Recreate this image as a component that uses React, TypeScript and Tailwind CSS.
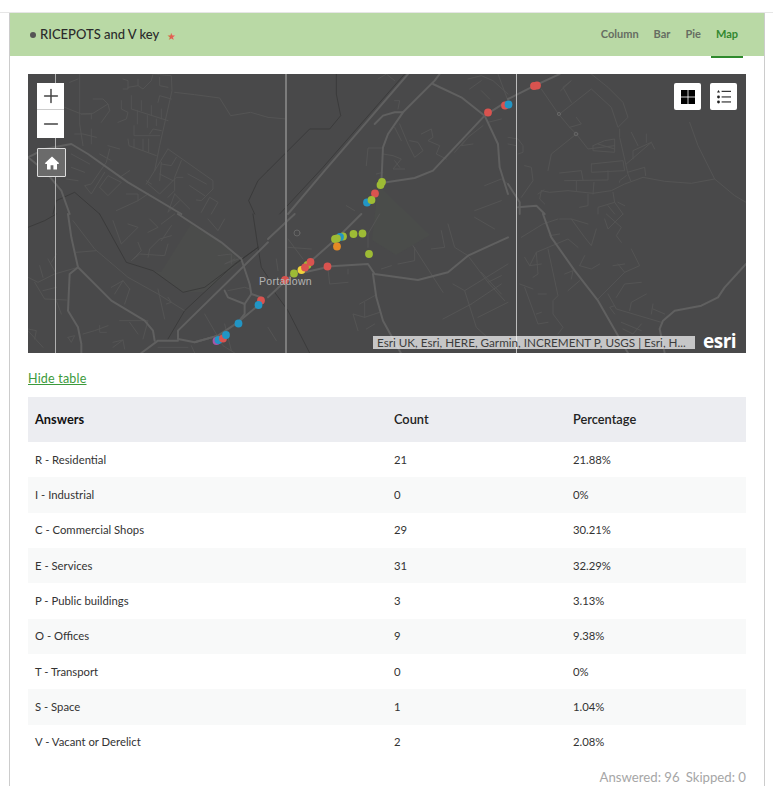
import { Minus, Plus } from "lucide-react";

const rows = [
  { answer: "R - Residential", count: 21, pct: "21.88%" },
  { answer: "I - Industrial", count: 0, pct: "0%" },
  { answer: "C - Commercial Shops", count: 29, pct: "30.21%" },
  { answer: "E - Services", count: 31, pct: "32.29%" },
  { answer: "P - Public buildings", count: 3, pct: "3.13%" },
  { answer: "O - Offices", count: 9, pct: "9.38%" },
  { answer: "T - Transport", count: 0, pct: "0%" },
  { answer: "S - Space", count: 1, pct: "1.04%" },
  { answer: "V - Vacant or Derelict", count: 2, pct: "2.08%" },
];

type Tile = {
  x: number;
  y: number;
  major: string[];
  minor: string[];
  dark: string[];
};

// street traces per tile of the map, in units of a third of a pixel
const tiles: Tile[] = [
  {
    x: 28,
    y: 74,
    major: ["0,250 50,225 130,210 180,240 300,325 460,420", "0,250 50,290 100,350 125,420"],
    minor: [
      "155,0 155,150 165,215",
      "150,15 125,25",
      "110,100 160,120 195,118 240,90 245,110 220,145",
      "195,75 225,75 240,90",
      "160,120 190,120 190,135",
      "140,180 165,180 205,190",
      "190,165 190,210",
      "285,15 300,20 300,45 285,45",
      "300,40 330,35 345,45 370,20 375,0 430,5 432,50 395,215 380,290 355,330",
      "395,10 395,35 420,40",
      "330,15 330,35",
      "440,55 500,62 575,72 608,125 668,115 720,130",
      "430,75 395,65 390,85",
      "310,65 310,105 420,140",
      "280,80 280,105 300,115 295,135 270,145",
      "340,80 340,110",
      "370,95 370,125",
      "400,105 400,135",
      "328,110 328,150",
      "358,125 358,160",
      "385,135 385,155",
      "318,155 318,185 395,185",
      "365,180 375,165 400,170",
      "300,195 303,215 385,245",
      "318,195 318,222",
      "345,195 345,230",
      "362,195 362,235",
      "420,225 555,320 555,345 520,380 505,378",
      "420,225 380,290",
      "360,330 395,360 445,310 465,310",
      "400,270 430,275 445,250",
      "460,260 440,310 440,350 420,370",
      "480,300 535,330",
      "485,335 530,365",
      "395,300 435,320",
      "400,265 395,320",
      "370,330 355,320",
      "240,215 275,225",
      "245,225 235,265 190,330 170,335 190,360 230,295",
      "215,240 250,260",
      "215,340 240,305 280,325 240,365 215,340",
      "130,240 185,270",
      "130,280 170,295",
      "115,315 150,320",
      "275,310 305,290",
      "295,360 330,360 330,380 265,410",
      "360,360 330,380",
      "440,360 485,405",
      "455,380 420,415 440,360",
      "520,415 545,370 570,385 550,420",
    ],
    dark: ["75,420 85,380 140,355 215,420", "720,290 690,320 662,380 680,420"],
  },
  {
    x: 268,
    y: 74,
    major: [
      "60,420 170,290 420,0",
      "340,330 345,220 360,180 405,115 500,20 515,0",
      "320,150 345,125 380,115 405,115",
      "355,325 440,312 495,290 650,125 712,85",
      "495,30 580,70 650,125 690,210 695,280 720,360",
    ],
    minor: [
      "0,130 55,135",
      "330,15 355,0 380,20",
      "380,80 395,80 390,105",
      "395,150 420,210 440,250 465,230 450,205 425,200",
      "380,160 400,200",
      "460,180 490,165 495,190 480,200 515,215 505,240 535,255",
      "295,275 300,222 345,222",
      "345,240 375,245 400,255 375,285 410,285",
      "380,260 395,280",
      "325,300 345,295",
      "600,15 640,5 675,20 720,60",
      "605,45 640,20",
      "640,50 665,75",
      "690,0 720,80",
      "660,145 700,135",
      "645,155 600,190 580,215 615,210",
      "560,235 590,200",
      "650,335 700,315 720,330",
      "620,410 700,380",
      "235,395 260,410",
    ],
    dark: ["205,0 205,60 218,125 185,165 125,165 0,290", "35,420 165,280 410,0"],
  },
  {
    x: 508,
    y: 74,
    major: ["0,75 80,35 155,0", "0,330 35,385 35,420", "30,400 85,395 110,420"],
    minor: [
      "100,45 150,118 185,160 205,180 240,225 320,215",
      "155,120 250,45 310,100 330,160 360,130 345,85 300,40 250,0",
      "158,50 190,20 165,40 190,85",
      "185,160 220,150 205,130",
      "205,180 130,240 120,290",
      "255,215 290,200 320,195 320,235 255,230 255,215",
      "335,165 335,190 360,300 368,320",
      "270,210 320,225",
      "250,270 345,260 350,290 250,295 250,270",
      "355,270 430,205 440,225",
      "375,255 375,230 430,205",
      "415,180 415,205",
      "370,175 390,215",
      "358,295 410,280 413,305",
      "155,297 220,290 225,318",
      "170,320 300,318 300,290",
      "205,320 205,350",
      "258,325 255,360",
      "335,325 335,320 355,305",
      "100,350 125,355 180,350 255,358 310,350 350,330 405,310 470,322 550,328 620,315 680,365 714,385",
      "545,145 570,215 620,315",
      "100,350 95,375 110,390",
      "90,360 108,348",
      "240,360 240,395 215,400",
      "315,355 320,385 270,400 270,420",
      "320,385 345,420",
      "300,395 320,420",
      "330,385 350,395",
      "0,190 30,195 45,215 45,235 30,240",
      "0,210 25,215",
      "50,275 70,280 75,320 40,370",
    ],
    dark: [],
  },
  {
    x: 28,
    y: 214,
    major: [
      "120,0 130,70 150,160 250,260 350,320 375,350 380,380",
      "150,160 125,180 120,290 150,340 160,390 160,417",
      "450,0 580,85 640,135 665,210 670,240 700,250",
      "720,85 450,350 450,375 500,385 570,365",
      "340,417 390,380 450,380",
      "500,385 570,365 630,325 690,275",
      "590,230 600,250 650,270 670,240",
      "650,270 650,300 630,325",
    ],
    minor: [
      "135,20 200,105 300,190 390,240 470,290",
      "255,20 280,90 300,70 330,40 300,30",
      "330,85 340,110 310,140 335,120 410,125 420,90",
      "360,130 365,105 395,75 430,65",
      "365,15 390,40 360,55",
      "430,35 400,80",
      "440,0 400,30",
      "540,15 570,50 590,15",
      "570,125 610,120 610,150",
      "645,130 590,150 620,135",
      "0,190 30,205 80,180 150,160",
      "35,155 45,190",
      "60,135 85,180",
      "85,120 70,145",
      "20,205 50,255 115,258",
      "45,230 85,220",
      "85,260 100,300",
      "145,115 205,110",
      "250,220 285,200 305,225",
      "260,240 285,200",
      "305,225 290,270",
      "390,225 410,315",
      "420,250 430,265 415,270",
      "275,320 360,320 345,375",
      "305,325 330,360",
      "165,360 200,350 240,335",
      "215,335 215,355 235,355",
      "120,370 140,365 130,385 120,370",
      "255,385 285,378 290,405",
      "285,378 255,400",
      "0,345 25,350 20,375",
      "0,350 45,400",
      "530,300 585,395 620,417",
      "490,395 500,417",
      "590,330 610,410",
      "600,230 650,220 665,225",
      "390,400 480,400",
    ],
    dark: [
      "0,40 50,20 85,0",
      "215,0 295,145 375,170 465,235 530,220 690,100 675,0",
      "690,100 700,160 720,190",
      "690,100 620,150 470,290 420,375",
    ],
  },
  {
    x: 268,
    y: 214,
    major: [
      "0,75 80,0",
      "0,250 75,180 130,140 210,70 280,0",
      "110,175 190,157 300,150 320,180 450,198 540,175 600,125 720,70",
      "315,180 325,250 345,320 400,420",
    ],
    minor: [
      "60,75 105,135",
      "60,100 130,105",
      "25,135 30,170",
      "240,165 240,180",
      "180,165 185,210 240,205",
      "300,100 300,60 335,0",
      "390,150 440,140 440,100",
      "340,165 370,155",
      "435,95 525,235",
      "490,105 530,100 520,50",
      "540,30 560,100 600,125",
      "620,10 680,45",
      "600,125 660,205 700,185",
      "555,210 590,230 625,340 680,390",
      "590,230 720,150",
      "610,270 700,210",
      "630,310 720,265",
      "525,315 610,270",
      "275,270 320,245",
      "290,265 290,310 255,300 270,350",
      "290,310 335,295",
      "320,330 295,345",
      "660,205 710,260",
      "640,175 700,240",
      "0,340 25,380",
    ],
    dark: ["20,235 60,290 125,417"],
  },
  {
    x: 508,
    y: 214,
    major: [
      "105,0 130,70 200,170 270,260 310,330 360,417",
      "714,150 650,220 630,250 580,275 500,290 465,320 455,345 470,417",
    ],
    minor: [
      "40,70 105,30 150,15",
      "155,15 190,15 240,30",
      "190,15 230,70 250,95 265,45",
      "85,115 180,75 210,100",
      "85,115 65,155 50,130",
      "65,155 100,150",
      "85,115 90,180 75,190",
      "120,105 150,245 135,260 135,300 165,340 150,360",
      "35,210 75,225",
      "50,220 90,330 120,325",
      "90,240 115,240",
      "85,300 100,295",
      "125,65 155,60",
      "170,180 195,170 190,195",
      "180,230 215,200",
      "215,155 230,125",
      "215,155 250,165 275,150",
      "330,150 350,175 395,155 370,105",
      "315,155 350,150",
      "350,175 270,255",
      "300,240 325,285 460,325",
      "320,275 305,280 320,300",
      "325,250 350,210 400,205",
      "365,290 370,265 415,240",
      "430,300 435,270",
      "435,285 470,300",
      "340,325 400,350",
      "345,345 375,360 400,330",
      "290,15 300,45 345,0",
      "295,0 340,40 325,65 340,85",
    ],
    dark: [],
  },
];

const dots: [number, number, string][] = [
  [534, 86, "#d9534f"],
  [537, 85.5, "#d9534f"],
  [488, 112.5, "#d9534f"],
  [505, 105.5, "#d9534f"],
  [508.5, 104.5, "#2295c4"],
  [382, 182, "#9dbb35"],
  [380.5, 185, "#9dbb35"],
  [375, 193.5, "#d9534f"],
  [367, 202.5, "#2295c4"],
  [371.5, 200, "#9dbb35"],
  [343, 236.5, "#9dbb35"],
  [340, 237, "#2295c4"],
  [337, 238.5, "#9dbb35"],
  [335, 239, "#9dbb35"],
  [353.5, 234, "#9dbb35"],
  [362.5, 233.5, "#9dbb35"],
  [337, 246.5, "#e58a25"],
  [369, 254, "#9dbb35"],
  [327.5, 266.5, "#d9534f"],
  [285, 280, "#d9534f"],
  [307.5, 265, "#9dbb35"],
  [310.5, 262, "#d9534f"],
  [301.5, 270, "#f0d23c"],
  [305, 267.5, "#d9534f"],
  [294, 273.5, "#9dbb35"],
  [261, 300.5, "#d9534f"],
  [258.5, 305, "#2295c4"],
  [238.5, 323.5, "#2295c4"],
  [216.5, 341, "#a855a8"],
  [218.5, 340, "#2295c4"],
  [223, 338.5, "#d9534f"],
  [226, 335, "#2295c4"],
];

function MapDrawing() {
  return (
    <svg
      viewBox="28 74 718 279"
      className="block h-[279px] w-[718px]"
      aria-hidden="true"
    >
      <rect x="28" y="74" width="718" height="279" fill="#49494a" />
      <polygon points="161,272 191,224 223,244 241,262 205,292 183,292 153,271" fill="#4b4c4b" />
      <polygon points="378,185 430,235 396,255 372,240" fill="#4a4c4a" />
      <g fill="none" strokeLinejoin="round" strokeLinecap="round">
        {tiles.map((tile) => (
          <g key={`${tile.x}-${tile.y}`} transform={`translate(${tile.x} ${tile.y}) scale(0.3333)`}>
            {tile.minor.map((points, i) => (
              <polyline key={i} points={points} stroke="#545454" strokeWidth="3" />
            ))}
            {tile.dark.map((points, i) => (
              <polyline key={i} points={points} stroke="#363636" strokeWidth="2.2" />
            ))}
            {tile.major.map((points, i) => (
              <polyline key={i} points={points} stroke="#606060" strokeWidth="6" />
            ))}
          </g>
        ))}
        <circle cx="297" cy="233" r="3" stroke="#666" strokeWidth="1" />
        <circle cx="559" cy="114" r="1.6" stroke="#666" strokeWidth="1" />
        <circle cx="576" cy="134" r="1.8" stroke="#666" strokeWidth="1" />
      </g>
      <line x1="55.5" y1="74" x2="55.5" y2="353" stroke="#b0b0b0" strokeWidth="1" />
      <line x1="286" y1="74" x2="286" y2="353" stroke="#7c7c7c" strokeWidth="2" />
      <line x1="516.5" y1="74" x2="516.5" y2="353" stroke="#bdbdbd" strokeWidth="1" />
      {dots.map(([cx, cy, fill], i) => (
        <circle key={i} cx={cx} cy={cy} r="3.9" fill={fill} />
      ))}
    </svg>
  );
}

function MapView() {
  return (
    <div className="relative h-[279px] w-[718px] overflow-hidden">
      <MapDrawing />

      <div className="absolute left-[9px] top-[9px] flex w-[27px] flex-col bg-white text-[#444]">
        <div className="flex h-[27px] items-center justify-center border-b border-[#ccc]">
          <Plus size={22} strokeWidth={1.6} />
        </div>
        <div className="flex h-[28px] items-center justify-center">
          <Minus size={22} strokeWidth={1.6} />
        </div>
      </div>

      <div className="absolute left-[9px] top-[74px] flex h-[29px] w-[29px] items-center justify-center rounded-[1px] border border-[#ddd] bg-[#6b6b6b]">
        <svg viewBox="0 0 16 16" className="h-[16px] w-[16px]" fill="#fff">
          <path d="M8 1.5 0.8 8.2l.9.8H3v5.5h3.6V10.2h2.8v4.3H13V9h1.3l.9-.8z" />
        </svg>
      </div>

      <div className="absolute left-[646px] top-[9px] flex h-[27px] w-[27px] items-center justify-center rounded-[2px] bg-white">
        <svg viewBox="0 0 14 14" className="h-[14px] w-[14px]" fill="#000">
          <rect x="0" y="0" width="6.6" height="6.6" />
          <rect x="7.4" y="0" width="6.6" height="6.6" />
          <rect x="0" y="7.4" width="6.6" height="6.6" />
          <rect x="7.4" y="7.4" width="6.6" height="6.6" />
        </svg>
      </div>

      <div className="absolute left-[682px] top-[9px] flex h-[27px] w-[27px] items-center justify-center rounded-[2px] bg-white">
        <svg viewBox="0 0 14 14" className="h-[14px] w-[14px]" fill="#222">
          <path d="M1.5 0 3 2.4H0z" />
          <circle cx="1.5" cy="7" r="1.4" />
          <circle cx="1.5" cy="12" r="1.4" />
          <rect x="4.6" y="0.8" width="9.4" height="1.1" />
          <rect x="4.6" y="6.4" width="9.4" height="1.1" />
          <rect x="4.6" y="11.4" width="9.4" height="1.1" />
        </svg>
      </div>

      <span className="absolute left-[231px] top-[200px] text-[10.5px] leading-[14px] tracking-[0.3px] text-[#b4b4b4] [font-family:'Liberation_Sans',sans-serif]">
        Portadown
      </span>

      <div className="absolute left-[345px] top-[262px] h-[13px] w-[322px] whitespace-nowrap bg-[#ffffffb0] px-[4px] text-[11.7px] leading-[13px] text-[#3c3c3c]">
        Esri UK, Esri, HERE, Garmin, INCREMENT P, USGS | Esri, H...
      </div>

      <span className="absolute left-[675px] top-[255px] text-[19px] font-bold leading-[24px] tracking-[-0.5px] text-white [font-family:'Open_Sans',sans-serif]">
        esri
      </span>
    </div>
  );
}

export default function App() {
  return (
    <div className="min-h-[786px] bg-white pt-3 [font-family:Lato,sans-serif]">
      <div className="border-t border-[#e6e6e6]">
        <div className="ml-[9px] h-[773px] w-[756px] overflow-hidden border-x border-[#cccccc]">
          <div className="flex h-[43px] items-center justify-between bg-[#b9d9a5] pl-[20px] pr-[26px]">
            <div className="flex items-center text-[#2b2b2b]">
              <span className="mr-[4px] h-[6px] w-[6px] rounded-full bg-[#555]" />
              <span className="text-[13px] font-medium">RICEPOTS and V key</span>
              <span className="ml-[8px] mt-[3px] text-[10px] leading-none text-[#e2604e]">★</span>
            </div>
            <div className="flex h-full items-center gap-[15px] text-[11px] font-bold text-[#666d62]">
              <span>Column</span>
              <span>Bar</span>
              <span>Pie</span>
              <span className="relative text-[#32882f]">
                Map
                <span className="absolute -bottom-[15px] -left-[5px] -right-[5px] h-[2px] bg-[#2f8a2d]" />
              </span>
            </div>
          </div>

          <div className="px-[18px] pt-[18px]">
            <MapView />

            <div className="mt-[17px] h-[27px] text-[12.5px] leading-[18px] tracking-[0.2px] text-[#3c9a3c] underline">
              Hide table
            </div>

            <div className="grid h-[45px] grid-cols-[359px_179px_1fr] items-center bg-[#ecedf1] pl-[7px] pt-[1px] text-[12.8px] font-semibold text-[#222]">
              <span className="font-bold text-[#111]">Answers</span>
              <span>Count</span>
              <span>Percentage</span>
            </div>

            <div>
              {rows.map((row) => (
                <div
                  key={row.answer}
                  className="grid h-[35.33px] grid-cols-[359px_179px_1fr] items-center pl-[7px] pt-[1px] text-[11.3px] text-[#333] even:bg-[#f8f9f9]"
                >
                  <span>{row.answer}</span>
                  <span>{row.count}</span>
                  <span>{row.pct}</span>
                </div>
              ))}
            </div>

            <div className="mt-[8px] flex justify-end gap-[6px] text-[13.2px] text-[#a6a6a6]">
              <span>Answered: 96</span>
              <span>Skipped: 0</span>
            </div>
          </div>
        </div>
      </div>
    </div>
  );
}
